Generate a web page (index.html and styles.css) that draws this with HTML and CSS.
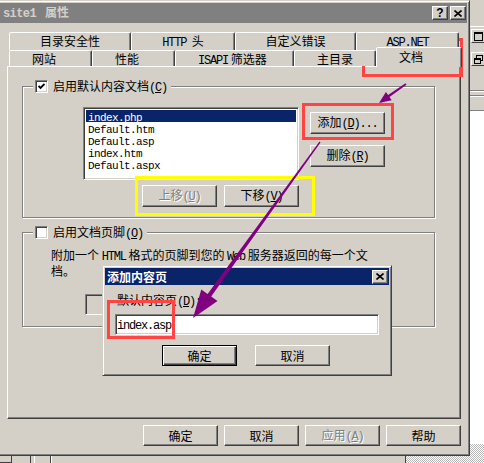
FILE: index.html
```html
<!DOCTYPE html>
<html>
  <head>
    <meta charset="UTF-8" />
    <meta name="viewport" content="width=device-width, initial-scale=1.0" />
    <title>site1 属性</title>
    <link rel="stylesheet" href="styles.css">
  </head>
  <body>
    <div class="desktop">
      <div class="dither"></div>

      <div class="back-win">
        <div class="back-top"></div>
        <div class="back-btn">
          <svg width="9" height="9" viewBox="0 0 9 9"><rect x="0.5" y="0.5" width="8" height="8" fill="none" stroke="#000"/><line x1="0" y1="1.5" x2="9" y2="1.5" stroke="#000"/></svg>
        </div>
        <div class="back-btn second">
          <svg width="9" height="9" viewBox="0 0 9 9"><rect x="2.5" y="0.5" width="6" height="5" fill="none" stroke="#000"/><rect x="0.5" y="3.5" width="6" height="5" fill="#d4d0c8" stroke="#000"/><line x1="0" y1="4.5" x2="7" y2="4.5" stroke="#000"/></svg>
        </div>
        <div class="back-rule"></div>
        <div class="back-rule"></div>
        <div class="back-white"></div>
      </div>

      <div class="back-strip">
        <div class="strip-box first"></div>
        <div class="strip-line"></div>
        <div class="strip-box small"></div>
        <div class="strip-box field"></div>
      </div>

      <!-- main property sheet -->
      <div class="window main-win">
        <div class="titlebar inactive">
          <span class="title"><span class="en site">site1</span>属性</span>
          <div class="cap-btns">
            <button class="cap-btn help">?</button>
            <button class="cap-btn">
              <svg width="8" height="7" viewBox="0 0 8 7"><path d="M0.5 0.5 L7.5 6.5 M7.5 0.5 L0.5 6.5" stroke="#000" stroke-width="1.6"/></svg>
            </button>
          </div>
        </div>

        <div class="win-body">
          <div class="tabs">
            <div class="tab-row back">
              <div class="tab w-sec">目录安全性</div>
              <div class="tab w-http"><span class="en">HTTP</span>&nbsp; 头</div>
              <div class="tab w-err">自定义错误</div>
              <div class="tab w-asp"><span class="en">ASP.NET</span></div>
            </div>
            <div class="tab-row front">
              <div class="tab w-site">网站</div>
              <div class="tab w-perf">性能</div>
              <div class="tab w-isapi"><span class="en">ISAPI</span> 筛选器</div>
              <div class="tab w-home">主目录</div>
              <div class="tab w-doc on">文档</div>
            </div>
          </div>

          <div class="panel">
            <div class="group g1">
              <div class="group-title">
                <span class="check">
                  <svg width="7" height="7" viewBox="0 0 7 7"><polyline points="0.5,3 2.5,5 6.5,1" fill="none" stroke="#000" stroke-width="1.8"/></svg>
                </span>
                <span>启用默认内容文档<span class="en">(<u>C</u>)</span></span>
              </div>
              <div class="doc-row">
                <ul class="listbox">
                  <li class="sel"><span class="en">index.php</span></li>
                  <li><span class="en">Default.htm</span></li>
                  <li><span class="en">Default.asp</span></li>
                  <li><span class="en">index.htm</span></li>
                  <li><span class="en">Default.aspx</span></li>
                </ul>
                <div class="side-btns">
                  <button class="btn tall">添加<span class="en">(<u>D</u>)...</span></button>
                  <button class="btn tall">删除<span class="en">(<u>R</u>)</span></button>
                </div>
              </div>
              <div class="move-row">
                <button class="btn tall" disabled>上移<span class="en">(<u>U</u>)</span></button>
                <button class="btn tall">下移<span class="en">(<u>V</u>)</span></button>
              </div>
            </div>

            <div class="group g2">
              <div class="group-title">
                <span class="check"></span>
                <span>启用文档页脚<span class="en">(<u>O</u>)</span></span>
              </div>
              <p class="footer-note">附加一个 <span class="en">HTML</span> 格式的页脚到您的 <span class="en">Web</span> 服务器返回的每一个文<br>档。</p>
              <div class="footer-field"></div>
            </div>
          </div>

          <div class="dlg-btns">
            <button class="btn">确定</button>
            <button class="btn">取消</button>
            <button class="btn" disabled>应用<span class="en">(<u>A</u>)</span></button>
            <button class="btn">帮助</button>
          </div>
        </div>
      </div>

      <!-- add content page dialog -->
      <div class="window sub-win">
        <div class="titlebar active">
          <span class="title">添加内容页</span>
          <button class="cap-btn">
            <svg width="8" height="7" viewBox="0 0 8 7"><path d="M0.5 0.5 L7.5 6.5 M7.5 0.5 L0.5 6.5" stroke="#000" stroke-width="1.6"/></svg>
          </button>
        </div>
        <div class="sub-body">
          <div class="sub-label">默认内容页<span class="en">(<u>D</u>):</span></div>
          <div class="sub-field"><span class="en">index.asp</span></div>
          <div class="sub-btns">
            <button class="btn default">确定</button>
            <button class="btn">取消</button>
          </div>
        </div>
      </div>

      <!-- annotations drawn over the screenshot -->
      <svg class="marks" width="484" height="463" viewBox="0 0 484 463">
        <rect x="363.5" y="39.5" width="98" height="36" fill="none" stroke="#f44" stroke-width="3"/>
        <rect x="303.5" y="104.5" width="89" height="34" fill="none" stroke="#f44" stroke-width="3"/>
        <rect x="108.5" y="301.5" width="65" height="36" fill="none" stroke="#f44" stroke-width="3"/>
        <rect x="136.5" y="177.5" width="177" height="37" fill="none" stroke="#ff0" stroke-width="3"/>
        <polygon fill="#800080" points="406.5,84.7 389.5,97.1 391.7,100.2 379,103 385.9,92.0 388.1,95.1 405.5,83.3"/>
        <polygon fill="#800080" points="320.5,142.4 211.2,296.6 217.5,301.1 193,318 201.3,289.5 207.6,294.0 319.5,141.6"/>
      </svg>
    </div>
  </body>
</html>
```

FILE: styles.css
```css
* {
  box-sizing: border-box;
}
body {
  margin: 0;
  font-family: "Noto Sans CJK SC", sans-serif;
  font-size: 12px;
  color: #000;
}
.desktop {
  position: relative;
  width: 484px;
  height: 463px;
  overflow: hidden;
  background: #fff;
}
.en {
  font-family: "Liberation Mono", "DejaVu Sans Mono", monospace;
  letter-spacing: -1.2px;
}

/* things behind the dialog */
.dither {
  position: absolute;
  left: 405px;
  top: 444px;
  width: 79px;
  height: 19px;
  background: repeating-conic-gradient(#b8b8b8 0 25%, #fff 0 50%) 0 0 / 2px 2px;
}
.back-win {
  position: absolute;
  left: 468px;
  top: 0;
  width: 20px;
  height: 444px;
  background: #d4d0c8;
  display: flex;
  flex-direction: column;
}
.back-top {
  height: 27px;
  border-bottom: 1px solid #fff;
}
.back-btn {
  width: 15px;
  height: 14px;
  margin: 2px 0 0 3px;
  background: #d4d0c8;
  border: 1px solid;
  border-color: #fff #404040 #404040 #fff;
  display: flex;
  align-items: center;
  justify-content: center;
}
.back-btn.second {
  margin-top: 9px;
}
.back-rule {
  height: 2px;
  margin-top: 24px;
  border-top: 1px solid #808080;
  border-bottom: 1px solid #fff;
}
.back-rule + .back-rule {
  margin-top: 3px;
}
.back-white {
  flex: 1;
  margin-top: 13px;
  background: #fff;
  border-top: 1px solid #808080;
}
.back-strip {
  position: absolute;
  left: 0;
  top: 455px;
  width: 406px;
  height: 8px;
  background: #d4d0c8;
  display: flex;
  border-right: 1px solid #404040;
}
.strip-box {
  height: 8px;
  border-right: 1px solid #404040;
}
.strip-box.first {
  width: 12px;
  border-bottom: 1px solid #404040;
}
.strip-line {
  width: 1px;
  margin-left: 18px;
  background: #404040;
}
.strip-box.small {
  width: 17px;
  margin-left: 3px;
  border-left: 1px solid #fff;
}
.strip-box.field {
  flex: 1;
  border-left: 1px solid #fff;
  border-right: 0;
}

/* windows */
.window {
  position: absolute;
  display: flex;
  flex-direction: column;
  background: #d4d0c8;
  border: 1px solid;
  border-color: #d4d0c8 #404040 #404040 #d4d0c8;
  box-shadow: inset 1px 1px #fff, inset -1px -1px #808080;
  padding: 2px;
}
.main-win {
  left: -3px;
  top: 0;
  width: 473px;
  height: 456px;
}
.sub-win {
  left: 102px;
  top: 265px;
  width: 290px;
  height: 111px;
}
.titlebar {
  display: flex;
  align-items: center;
  justify-content: space-between;
  height: 20px;
  padding: 0 1px 0 3px;
  font-weight: bold;
  flex-shrink: 0;
}
.titlebar.inactive {
  background: #808080;
  color: #d4d0c8;
}
.titlebar.active {
  height: 17px;
  padding-left: 2px;
  background: #0a246a;
  color: #fff;
}
.title {
  line-height: 14px;
}
.title .site {
  letter-spacing: -0.6px;
  margin-right: 9px;
}
.cap-btns {
  display: flex;
  gap: 2px;
}
.btn,
.cap-btn {
  background: #d4d0c8;
  border: 1px solid;
  border-color: #fff #404040 #404040 #fff;
  box-shadow: inset -1px -1px #808080;
  font: inherit;
  color: #000;
  padding: 0;
}
.cap-btn {
  width: 16px;
  height: 14px;
  display: flex;
  align-items: center;
  justify-content: center;
}
.cap-btn.help {
  font-family: "Liberation Sans", sans-serif;
  font-weight: bold;
  font-size: 12px;
  line-height: 12px;
}
.btn {
  width: 75px;
  height: 21px;
  line-height: 17px;
  text-align: center;
}
.btn.tall {
  height: 22px;
}
.btn:disabled {
  color: #808080;
  text-shadow: 1px 1px #fff;
}
.btn.default {
  border-color: #000;
  box-shadow: inset 1px 1px #fff, inset -1px -1px #404040, inset -2px -2px #808080;
}

/* property sheet body */
.win-body {
  padding: 9px 0 0 7px;
}
.tabs {
  position: relative;
  z-index: 1;
  margin-left: 2px;
}
.tab-row {
  display: flex;
}
.tab-row.back {
  height: 18px;
}
.tab-row.front {
  height: 16px;
}
.tab {
  flex-shrink: 0;
  height: 18px;
  border: 1px solid;
  border-bottom: 0;
  border-color: #fff #404040 transparent #fff;
  border-radius: 2px 2px 0 0;
  box-shadow: inset -1px 0 #808080;
  background: #d4d0c8;
  line-height: 15px;
}
.back .tab {
  text-align: center;
}
.front .tab {
  height: 16px;
  line-height: 16px;
  padding-left: 22px;
}
.front .tab.on {
  height: 20px;
  margin-top: -3px;
  line-height: 17px;
}
.w-sec { width: 122px; }
.w-http { width: 104px; }
.w-err { width: 121px; }
.w-asp { width: 103px; }
.w-site { width: 83px; }
.w-perf { width: 83px; }
.w-isapi { width: 119px; }
.w-home { width: 82px; }
.w-doc { width: 86px; }

.panel {
  width: 454px;
  height: 353px;
  border: 1px solid;
  border-color: #fff #404040 #404040 #fff;
  box-shadow: inset -1px -1px #808080;
  overflow: hidden;
}
.group {
  width: 413px;
  margin-left: 14px;
  border: 1px solid #808080;
  box-shadow: inset 1px 1px #fff, 1px 1px #fff;
}
.g1 {
  margin-top: 19px;
  height: 132px;
}
.g2 {
  margin-top: 14px;
  height: 95px;
}
.group-title {
  display: flex;
  align-items: center;
  gap: 5px;
  width: fit-content;
  height: 13px;
  margin: -7px 0 0 10px;
  padding: 0 4px 0 2px;
  background: #d4d0c8;
  line-height: 13px;
}
.check {
  width: 13px;
  height: 13px;
  background: #fff;
  border: 1px solid;
  border-color: #808080 #fff #fff #808080;
  box-shadow: inset 1px 1px #404040, inset -1px -1px #d4d0c8;
  display: flex;
  align-items: center;
  justify-content: center;
}
.doc-row {
  display: flex;
  margin-top: 14px;
}
.listbox {
  list-style: none;
  margin: 0 0 0 60px;
  padding: 2px;
  width: 216px;
  height: 73px;
  background: #fff;
  border: 1px solid;
  border-color: #808080 #fff #fff #808080;
  box-shadow: inset 1px 1px #404040, inset -1px -1px #d4d0c8;
}
.listbox li {
  height: 12px;
  line-height: 12px;
  padding-left: 2px;
}
.listbox .en {
  font-size: 11px;
  letter-spacing: -0.6px;
}
.listbox li.sel {
  background: #0a246a;
  color: #fff;
}
.side-btns {
  display: flex;
  flex-direction: column;
  gap: 11px;
  margin: 5px 0 0 11px;
}
.move-row {
  display: flex;
  gap: 7px;
  margin: 5px 0 0 119px;
}
.footer-note {
  margin: 9px 0 0 28px;
  line-height: 14px;
}
.footer-field {
  width: 220px;
  height: 21px;
  margin: 16px 0 0 62px;
  border: 1px solid;
  border-color: #808080 #fff #fff #808080;
  box-shadow: inset 1px 1px #404040, inset -1px -1px #d4d0c8;
}
.dlg-btns {
  display: flex;
  justify-content: flex-end;
  gap: 6px;
  width: 454px;
  margin-top: 6px;
}

/* add page dialog */
.sub-body {
  display: flex;
  flex-direction: column;
}
.sub-label {
  margin: 9px 0 0 12px;
  line-height: 12px;
}
.sub-field {
  width: 264px;
  height: 21px;
  margin: 6px 0 0 10px;
  padding-left: 1px;
  background: #fff;
  border: 1px solid;
  border-color: #808080 #fff #fff #808080;
  box-shadow: inset 1px 1px #404040, inset -1px -1px #d4d0c8;
  line-height: 17px;
}
.sub-btns {
  display: flex;
  gap: 18px;
  margin: 10px 0 0 57px;
}

.marks {
  position: absolute;
  left: 0;
  top: 0;
  pointer-events: none;
}
```
